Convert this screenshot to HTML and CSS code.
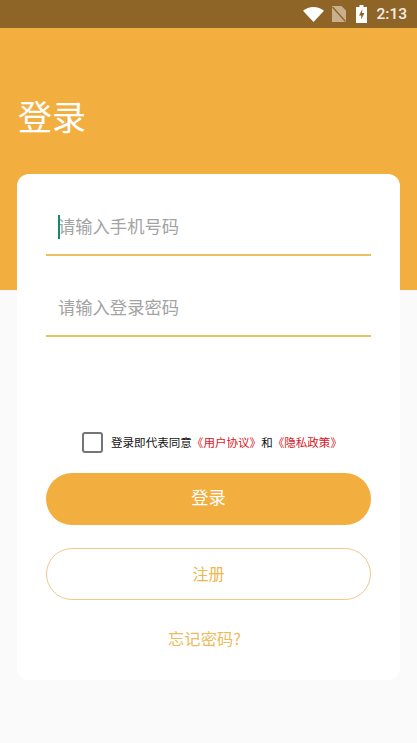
FILE: index.html

```html
<!DOCTYPE html>
<html lang="zh">
<head>
  <meta charset="utf-8">
  <link rel="stylesheet" href="styles.css">
</head>
<body>
  <div class="status-bar">
    <svg class="icon-wifi" viewBox="0 0 21 15" width="21" height="15"><path d="M0 3.8C2.9 1.4 6.5 0 10.5 0s7.6 1.4 10.5 3.8L10.5 15z" fill="#fff"/></svg>
    <svg class="icon-sim" viewBox="0 0 14 16" width="14" height="16"><path d="M0 0h9.5L14 4.5V16H0z" fill="#c9b08d"/><path d="M0.5 1L13.5 15.5" stroke="#8f6427" stroke-width="1.3"/></svg>
    <svg class="icon-battery" viewBox="0 0 11 18" width="11" height="18"><path d="M3.5 0h4v2H11v16H0V2h3.5z" fill="#fff"/><path d="M6.4 4L3 10.4h2.2v4L8.4 8H6z" fill="#8f6427"/></svg>
    <span class="clock">2:13</span>
  </div>

  <div class="hero">
    <h1>登录</h1>
  </div>

  <div class="card">
    <div class="field"><span class="caret"></span><input type="text" placeholder="请输入手机号码"></div>
    <div class="field"><input type="password" placeholder="请输入登录密码"></div>

    <div class="agree">
      <span class="checkbox"></span>
      <span>登录即代表同意<a class="link">《用户协议》</a>和<a class="link">《隐私政策》</a></span>
    </div>

    <button class="primary-button">登录</button>
    <button class="secondary-button">注册</button>
    <div class="forgot">忘记密码?</div>
  </div>
</body>
</html>
```

FILE: styles.css

```css
body {
  font-family: 'Noto Sans CJK SC', 'Roboto', sans-serif;
  margin: 0;
  height: 743px;
  overflow: hidden;
  background-color: #FAFAFA;
}
.status-bar {
  display: flex;
  align-items: center;
  justify-content: flex-end;
  height: 28px;
  padding-right: 10px;
  background-color: #8F6427;
}
.icon-wifi {
  margin-right: 8px;
}
.icon-sim {
  margin-right: 10px;
}
.icon-battery {
  margin-right: 9px;
}
.clock {
  font-family: 'Roboto', sans-serif;
  font-size: 15.5px;
  font-weight: 500;
  color: #F4EFE6;
}
.hero {
  height: 262px;
  background-color: #F2AE3F;
}
.hero h1 {
  margin: 0;
  padding: 62px 0 0 18px;
  font-size: 34px;
  font-weight: 400;
  line-height: 52px;
  color: #fff;
}
.card {
  display: flex;
  flex-direction: column;
  box-sizing: border-box;
  height: 506px;
  margin: -116px 17px 0;
  padding: 28px 29px 0;
  border-radius: 12px;
  background-color: #fff;
}
.field {
  position: relative;
  display: flex;
  height: 52px;
  margin-bottom: 27px;
  border-bottom: 2px solid #EBC05F;
}
.field input {
  flex: 1;
  min-width: 0;
  padding: 0 12px 6px;
  border: none;
  outline: none;
  background: transparent;
  font-family: inherit;
  font-size: 17.3px;
}
.field input::placeholder {
  color: #A3A3A3;
  opacity: 1;
}
.caret {
  position: absolute;
  left: 12px;
  top: 13px;
  width: 2px;
  height: 24px;
  background-color: #0F8A73;
}
.agree {
  display: flex;
  align-items: center;
  justify-content: center;
  gap: 8px;
  margin-top: 68px;
  padding-left: 7px;
  font-size: 11.55px;
  line-height: 21px;
  color: #111;
}
.checkbox {
  box-sizing: border-box;
  width: 21px;
  height: 21px;
  border: 2px solid #757575;
  border-radius: 3px;
}
.link {
  color: #D9161E;
}
button {
  flex: none;
  border: none;
  border-radius: 26px;
  height: 52px;
  padding: 0 0 2px;
  font-family: inherit;
  font-size: 16px;
  cursor: pointer;
}
.primary-button {
  margin-top: 20px;
  padding-bottom: 5px;
  font-size: 17.3px;
  background-color: #F2AE3F;
  color: #fff;
}
.secondary-button {
  margin-top: 23px;
  border: 1px solid #EFC98F;
  background-color: #fff;
  color: #EDB84F;
}
.forgot {
  margin-top: 26px;
  padding-right: 8px;
  font-size: 16.3px;
  line-height: 24px;
  text-align: center;
  color: #EDBB5E;
}
```
